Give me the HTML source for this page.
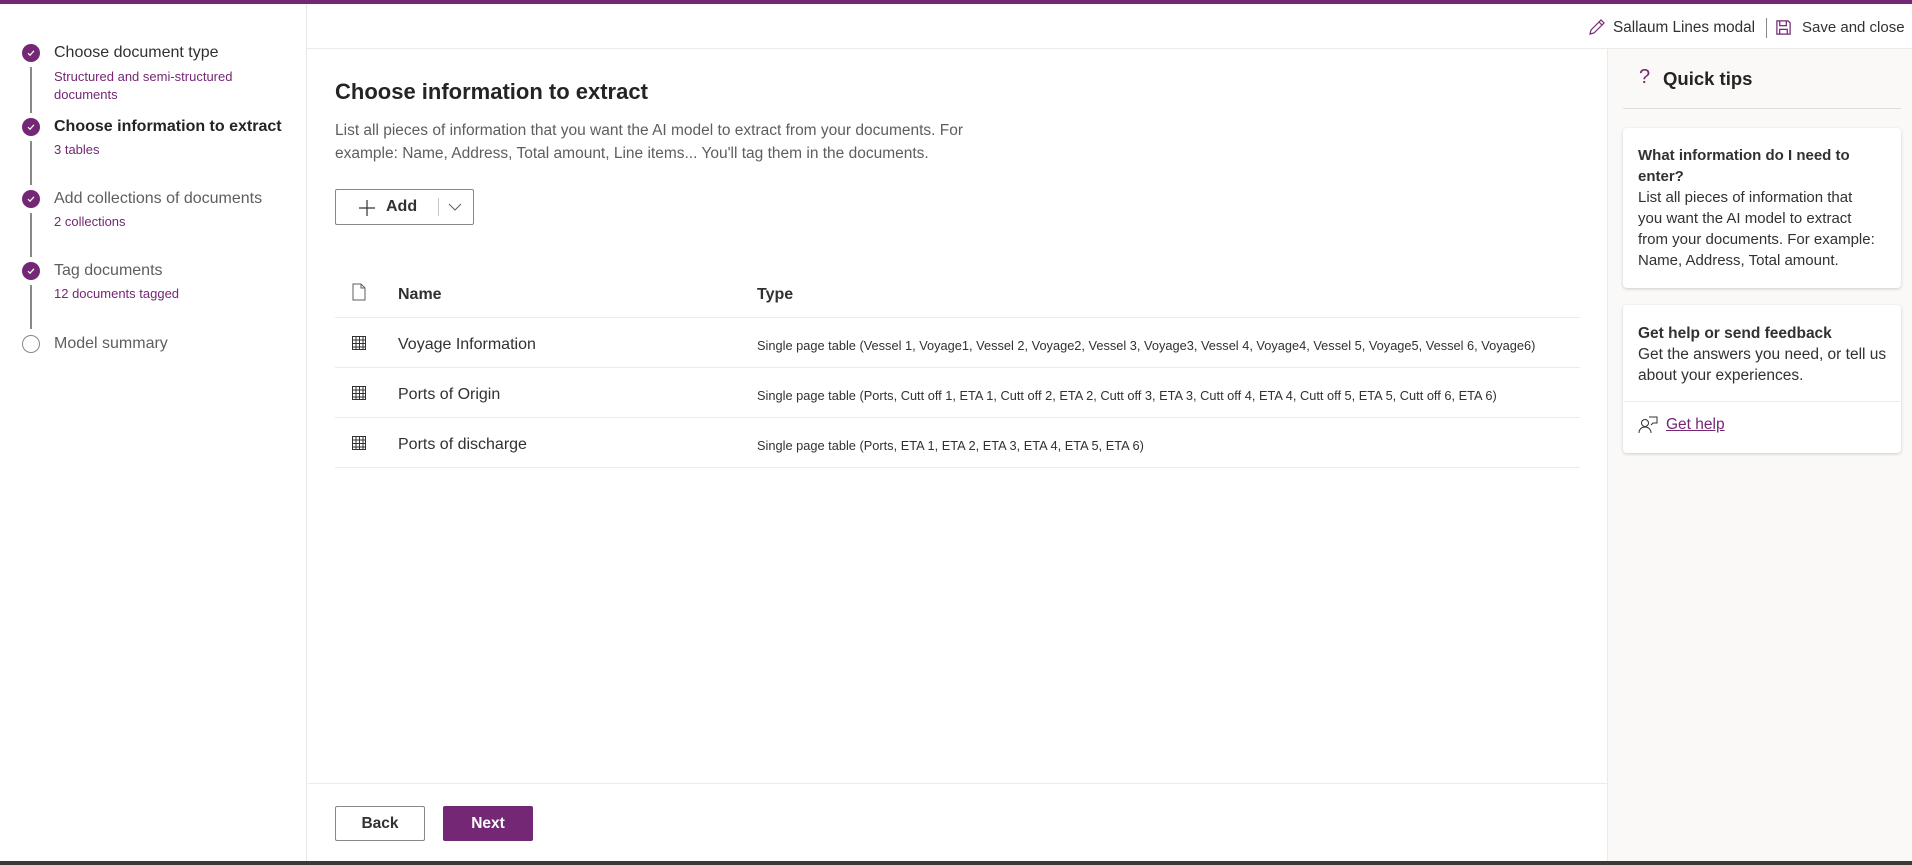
<!DOCTYPE html>
<html><head><meta charset="utf-8"><style>
*{box-sizing:border-box;margin:0;padding:0}
body{width:1912px;height:865px;overflow:hidden;background:#fff;font-family:"Liberation Sans",sans-serif;color:#323130;position:relative}
.abs{position:absolute}
.top{left:0;top:0;width:1912px;height:4px;background:#742774}
.side{left:0;top:4px;width:307px;height:857px;border-right:1px solid #e8e6e4}
.hdr{left:307px;top:4px;width:1605px;height:45px;border-bottom:1px solid #edebe9}
.step{position:absolute;left:54px;font-size:16px;color:#323130;white-space:nowrap}
.sub{position:absolute;left:54px;font-size:13px;color:#742774;line-height:18px}
.dot{position:absolute;left:22px;width:18px;height:18px;border-radius:50%;background:#742774}
.dot svg{position:absolute;left:4px;top:4px}
.vl{position:absolute;left:30px;width:2px;background:#8a8886}
.rp{left:1607px;top:49px;width:305px;height:812px;background:#faf9f8;border-left:1px solid #edebe9}
.card{position:absolute;left:15px;width:278px;background:#fff;border-radius:4px;box-shadow:0 1px 3px rgba(0,0,0,.18);padding:0 0 0 0}
.row{position:absolute;left:335px;width:1245px;height:50px;border-bottom:1px solid #edebe9}
.row .n{position:absolute;left:63px;top:18px;font-size:16px;color:#323130}
.row .t{position:absolute;left:422px;top:20px;font-size:12.8px;color:#323130;white-space:nowrap}
.row svg{position:absolute;left:16px;top:17px}
</style></head><body>
<div class="abs top"></div>
<div class="abs side">
 <div class="vl" style="top:63px;height:46px"></div>
 <div class="vl" style="top:137px;height:44px"></div>
 <div class="vl" style="top:209px;height:44px"></div>
 <div class="vl" style="top:281px;height:44px"></div>
 <div class="dot" style="top:40px"><svg width="10" height="10" viewBox="0 0 10 10"><path d="M2 5.2l2 2 4-4.4" fill="none" stroke="#fff" stroke-width="1.2"/></svg></div>
 <div class="dot" style="top:114px"><svg width="10" height="10" viewBox="0 0 10 10"><path d="M2 5.2l2 2 4-4.4" fill="none" stroke="#fff" stroke-width="1.2"/></svg></div>
 <div class="dot" style="top:186px"><svg width="10" height="10" viewBox="0 0 10 10"><path d="M2 5.2l2 2 4-4.4" fill="none" stroke="#fff" stroke-width="1.2"/></svg></div>
 <div class="dot" style="top:258px"><svg width="10" height="10" viewBox="0 0 10 10"><path d="M2 5.2l2 2 4-4.4" fill="none" stroke="#fff" stroke-width="1.2"/></svg></div>
 <div style="position:absolute;left:22px;top:331px;width:18px;height:18px;border-radius:50%;border:1.5px solid #8a8886"></div>
 <div class="step" style="top:40px">Choose document type</div>
 <div class="sub" style="top:64px">Structured and semi-structured<br>documents</div>
 <div class="step" style="top:114px;font-weight:bold;color:#252423">Choose information to extract</div>
 <div class="sub" style="top:137px">3 tables</div>
 <div class="step" style="top:186px;color:#605e5c">Add collections of documents</div>
 <div class="sub" style="top:209px">2 collections</div>
 <div class="step" style="top:258px;color:#605e5c">Tag documents</div>
 <div class="sub" style="top:281px">12 documents tagged</div>
 <div class="step" style="top:331px;color:#605e5c">Model summary</div>
</div>
<div class="abs hdr">
 <svg class="abs" style="left:1281px;top:14px" width="18" height="18" viewBox="0 0 18 18"><path d="M2 16l1-4L13 2l3 3L6 15z M11 4l3 3" fill="none" stroke="#742774" stroke-width="1.2"/></svg>
 <div class="abs" style="left:1306px;top:15px;font-size:15.3px;color:#323130">Sallaum Lines modal</div>
 <div class="abs" style="left:1459px;top:14px;width:1px;height:20px;background:#8a8886"></div>
 <svg class="abs" style="left:1468px;top:15px" width="17" height="17" viewBox="0 0 18 18"><path d="M2 2h12l2 2v12H2z M5 2v5h7V2 M5 16v-5h8v5" fill="none" stroke="#742774" stroke-width="1.3"/></svg>
 <div class="abs" style="left:1495px;top:15px;font-size:15px;color:#323130">Save and close</div>
</div>
<div class="abs" style="left:335px;top:79px;font-size:22px;font-weight:bold;color:#252423">Choose information to extract</div>
<div class="abs" style="left:335px;top:119px;width:680px;font-size:15.5px;line-height:23px;color:#605e5c">List all pieces of information that you want the AI model to extract from your documents. For example: Name, Address, Total amount, Line items... You'll tag them in the documents.</div>
<div class="abs" style="left:335px;top:189px;width:139px;height:36px;border:1px solid #8a8886;border-radius:2px">
 <svg class="abs" style="left:22px;top:9px" width="18" height="18" viewBox="0 0 18 18"><path d="M9 1v16M1 9h16" stroke="#323130" stroke-width="1.2"/></svg>
 <div class="abs" style="left:50px;top:8px;font-size:16px;font-weight:bold;color:#323130">Add</div>
 <div class="abs" style="left:102px;top:8px;width:1px;height:18px;background:#c8c6c4"></div>
 <svg class="abs" style="left:112px;top:12px" width="14" height="10" viewBox="0 0 14 10"><path d="M1 2l6 6 6-6" fill="none" stroke="#605e5c" stroke-width="1"/></svg>
</div>
<div class="row" style="top:268px">
 <svg width="16" height="18" viewBox="0 0 16 18" style="top:15px"><path d="M2 1h8l4 4v12H2z M10 1v4h4" fill="none" stroke="#605e5c" stroke-width="1"/></svg>
 <div class="n" style="top:18px;font-weight:bold">Name</div>
 <div class="t" style="top:18px;font-size:16px;font-weight:bold">Type</div>
</div>
<div class="row" style="top:318px"><svg width="16" height="16" viewBox="0 0 16 16"><path d="M1.5 1.5h13v13h-13z M1.5 5h13M1.5 8.5h13M1.5 12h13M5 1.5v13M8.5 1.5v13M12 1.5v13" fill="none" stroke="#323130" stroke-width="1"/></svg><div class="n">Voyage Information</div><div class="t">Single page table (Vessel 1, Voyage1, Vessel 2, Voyage2, Vessel 3, Voyage3, Vessel 4, Voyage4, Vessel 5, Voyage5, Vessel 6, Voyage6)</div></div>
<div class="row" style="top:368px"><svg width="16" height="16" viewBox="0 0 16 16"><path d="M1.5 1.5h13v13h-13z M1.5 5h13M1.5 8.5h13M1.5 12h13M5 1.5v13M8.5 1.5v13M12 1.5v13" fill="none" stroke="#323130" stroke-width="1"/></svg><div class="n">Ports of Origin</div><div class="t">Single page table (Ports, Cutt off 1, ETA 1, Cutt off 2, ETA 2, Cutt off 3, ETA 3, Cutt off 4, ETA 4, Cutt off 5, ETA 5, Cutt off 6, ETA 6)</div></div>
<div class="row" style="top:418px"><svg width="16" height="16" viewBox="0 0 16 16"><path d="M1.5 1.5h13v13h-13z M1.5 5h13M1.5 8.5h13M1.5 12h13M5 1.5v13M8.5 1.5v13M12 1.5v13" fill="none" stroke="#323130" stroke-width="1"/></svg><div class="n">Ports of discharge</div><div class="t">Single page table (Ports, ETA 1, ETA 2, ETA 3, ETA 4, ETA 5, ETA 6)</div></div>
<div class="abs" style="left:308px;top:783px;width:1299px;height:1px;background:#edebe9"></div>
<div class="abs" style="left:335px;top:806px;width:90px;height:35px;border:1px solid #8a8886;border-radius:2px;font-size:15.5px;font-weight:bold;text-align:center;line-height:33px">Back</div>
<div class="abs" style="left:443px;top:806px;width:90px;height:35px;background:#742774;border-radius:2px;color:#fff;font-size:15.5px;font-weight:bold;text-align:center;line-height:35px">Next</div>
<div class="abs rp">
 <div class="abs" style="left:31px;top:17px;font-size:20px;color:#742774">?</div>
 <div class="abs" style="left:55px;top:19px;font-size:18.5px;font-weight:bold;color:#252423">Quick tips</div>
 <div class="abs" style="left:15px;top:59px;width:278px;height:1px;background:#e1dfdd"></div>
 <div class="card" style="top:79px;height:160px">
  <div style="position:absolute;left:15px;top:17px;width:240px;font-size:15px;line-height:21px;color:#323130"><b>What information do I need to enter?</b><br>List all pieces of information that you want the AI model to extract from your documents. For example: Name, Address, Total amount.</div>
 </div>
 <div class="card" style="top:256px;height:148px">
  <div style="position:absolute;left:15px;top:18px;width:258px;font-size:15.5px;line-height:21px;color:#323130"><b>Get help or send feedback</b><br>Get the answers you need, or tell us about your experiences.</div>
  <div style="position:absolute;left:1px;right:1px;top:96px;height:1px;background:#edebe9"></div>
  <svg style="position:absolute;left:15px;top:111px" width="20" height="18" viewBox="0 0 20 18"><circle cx="7" cy="7" r="3.5" fill="none" stroke="#323130"/><path d="M1 17c0-4 3-6 6-6s6 2 6 6M11 1h8v6h-4l-2 2" fill="none" stroke="#323130"/></svg>
  <div style="position:absolute;left:43px;top:111px;font-size:15.5px;color:#742774;text-decoration:underline">Get help</div>
 </div>
</div>
<div class="abs" style="left:0;top:861px;width:1912px;height:4px;background:#3b3a39"></div>
</body></html>
